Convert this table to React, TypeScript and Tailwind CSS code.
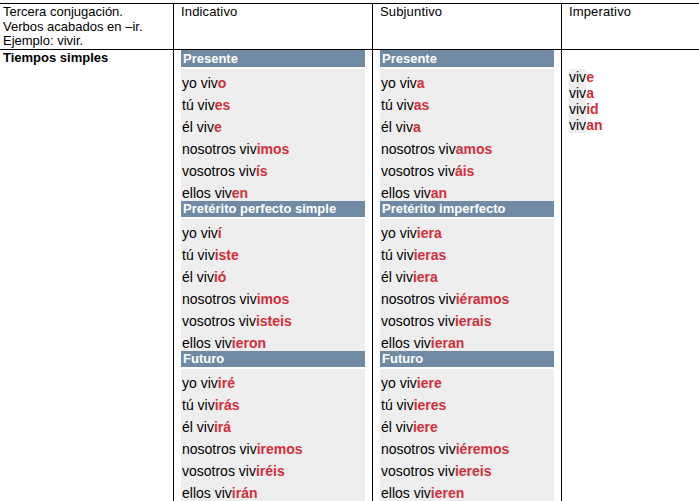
import React from "react";

type Form = [string, string];
type Section = { title: string; rows: Form[] };

const indicativo: Section[] = [
  {
    title: "Presente",
    rows: [
      ["yo viv", "o"],
      ["tú viv", "es"],
      ["él viv", "e"],
      ["nosotros viv", "imos"],
      ["vosotros viv", "ís"],
      ["ellos viv", "en"],
    ],
  },
  {
    title: "Pretérito perfecto simple",
    rows: [
      ["yo viv", "í"],
      ["tú viv", "iste"],
      ["él viv", "ió"],
      ["nosotros viv", "imos"],
      ["vosotros viv", "isteis"],
      ["ellos viv", "ieron"],
    ],
  },
  {
    title: "Futuro",
    rows: [
      ["yo viv", "iré"],
      ["tú viv", "irás"],
      ["él viv", "irá"],
      ["nosotros viv", "iremos"],
      ["vosotros viv", "iréis"],
      ["ellos viv", "irán"],
    ],
  },
];

const subjuntivo: Section[] = [
  {
    title: "Presente",
    rows: [
      ["yo viv", "a"],
      ["tú viv", "as"],
      ["él viv", "a"],
      ["nosotros viv", "amos"],
      ["vosotros viv", "áis"],
      ["ellos viv", "an"],
    ],
  },
  {
    title: "Pretérito imperfecto",
    rows: [
      ["yo viv", "iera"],
      ["tú viv", "ieras"],
      ["él viv", "iera"],
      ["nosotros viv", "iéramos"],
      ["vosotros viv", "ierais"],
      ["ellos viv", "ieran"],
    ],
  },
  {
    title: "Futuro",
    rows: [
      ["yo viv", "iere"],
      ["tú viv", "ieres"],
      ["él viv", "iere"],
      ["nosotros viv", "iéremos"],
      ["vosotros viv", "iereis"],
      ["ellos viv", "ieren"],
    ],
  },
];

const imperativo: Form[] = [
  ["viv", "e"],
  ["viv", "a"],
  ["viv", "id"],
  ["viv", "an"],
];

function SectionBlock({ s, first }: { s: Section; first: boolean }) {
  return (
    <div>
      <div
        className={
          first
            ? "h-[19px] border-b-2 border-white bg-[#718aa4] pl-[2px] text-[13px] font-bold leading-[17px] text-white"
            : "h-[18px] border-b-2 border-white bg-[#718aa4] pl-[2px] text-[13px] font-bold leading-[16px] text-white"
        }
      >
        {s.title}
      </div>
      <div className="bg-[#eeeeee]">
        {s.rows.map(([stem, end], i) => (
          <div key={i} className="h-[22px] pl-[1px] pt-[6px] text-[14px] leading-[16px] text-black">
            {stem}
            <span className="font-bold text-[#d42d3a]">{end}</span>
          </div>
        ))}
      </div>
    </div>
  );
}

export default function App() {
  return (
    <div
      className="h-[501px] w-[699px] overflow-hidden bg-white pt-[3px] text-black"
      style={{ fontFamily: '"Liberation Sans", Arial, sans-serif' }}
    >
      <div className="grid grid-cols-[173px_199px_189px_1fr] border-t border-black">
        {/* header row */}
        <div className="h-[46px] border-b border-black pl-[3px] pt-[1px] text-[13px] leading-[14.5px]">
          Tercera conjugación.
          <br />
          Verbos acabados en –ir.
          <br />
          Ejemplo: vivir.
        </div>
        <div className="h-[46px] border-b border-l border-black pl-[7px] pt-[1px] text-[13px] leading-[14.5px] tracking-[0.15px]">
          Indicativo
        </div>
        <div className="h-[46px] border-b border-l border-black pl-[7px] pt-[1px] text-[13px] leading-[14.5px] tracking-[0.15px]">
          Subjuntivo
        </div>
        <div className="h-[46px] border-b border-l border-black pl-[7px] pt-[1px] text-[13px] leading-[14.5px] tracking-[0.15px]">
          Imperativo
        </div>

        {/* body row */}
        <div className="pl-[3px] text-[13px] font-bold leading-[15px]">Tiempos simples</div>
        <div className="border-l border-black pl-[7px] pr-[7px]">
          {indicativo.map((s, i) => (
            <SectionBlock key={s.title} s={s} first={i === 0} />
          ))}
        </div>
        <div className="border-l border-black pl-[7px] pr-[7px]">
          {subjuntivo.map((s, i) => (
            <SectionBlock key={s.title} s={s} first={i === 0} />
          ))}
        </div>
        <div className="border-l border-black pl-[7px] pt-[19px] text-[14px] leading-[16px]">
          {imperativo.map(([stem, end], i) => (
            <div key={i}>
              <span className="bg-[#eeeeee]">{stem}</span>
              <span className="font-bold text-[#d42d3a]">{end}</span>
            </div>
          ))}
        </div>
      </div>
    </div>
  );
}
